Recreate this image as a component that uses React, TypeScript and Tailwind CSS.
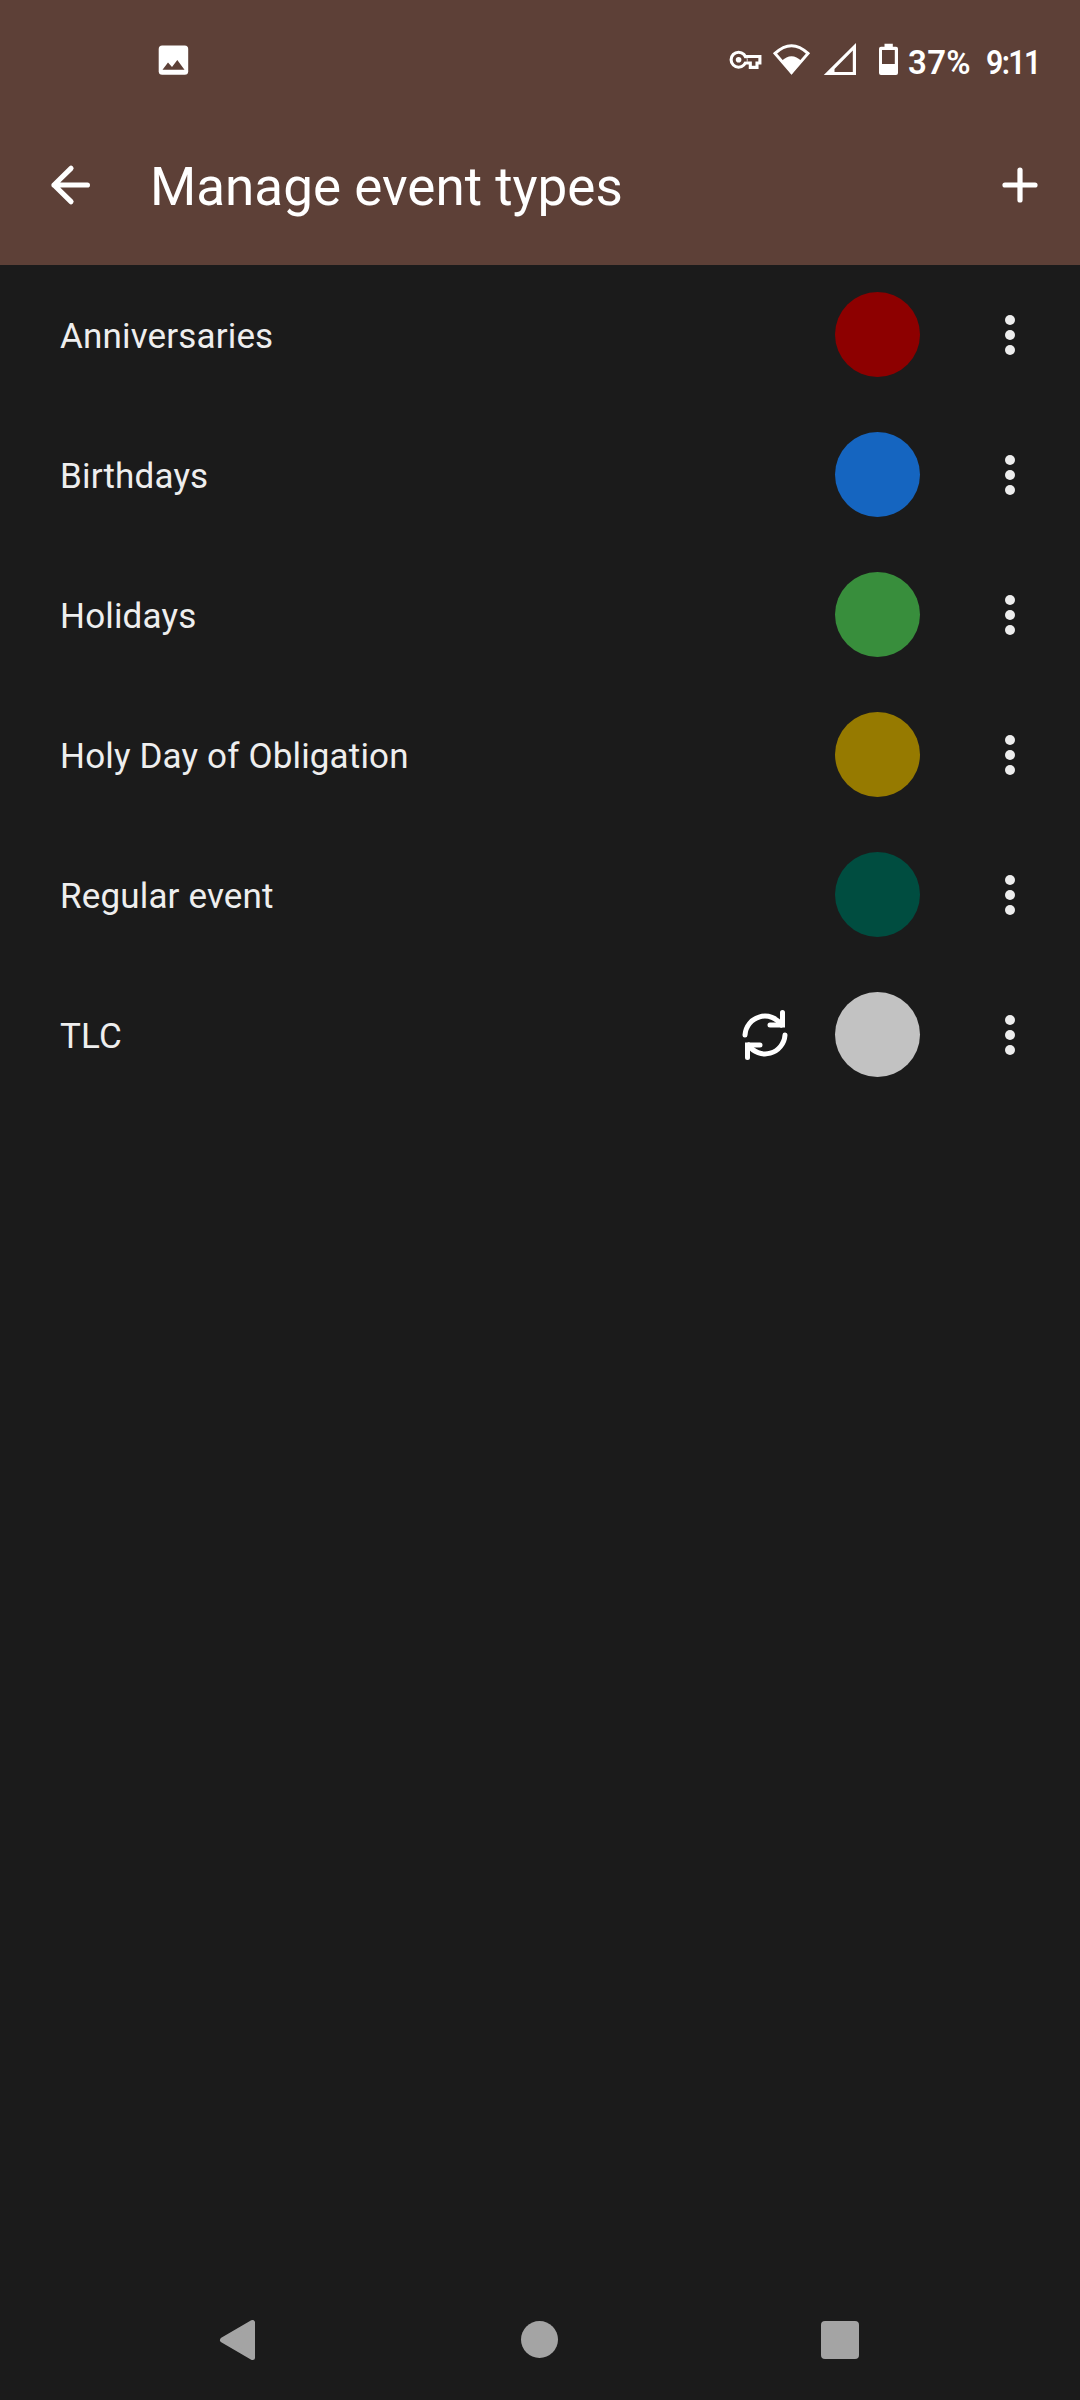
type EventType = { name: string; color: string; synced?: boolean };

const eventTypes: EventType[] = [
  { name: "Anniversaries", color: "bg-[#8d0000]" },
  { name: "Birthdays", color: "bg-[#1565c0]" },
  { name: "Holidays", color: "bg-[#388e3c]" },
  { name: "Holy Day of Obligation", color: "bg-[#967a00]" },
  { name: "Regular event", color: "bg-[#004d40]" },
  { name: "TLC", color: "bg-[#c2c2c2]", synced: true },
];

function StatusBar() {
  return (
    <div className="flex h-[105px] items-start text-white">
      <svg className="mt-[40px] ml-[153px] size-[40px] shrink-0" viewBox="0 0 40 40">
        <rect x="5.7" y="5.5" width="29.5" height="29.2" rx="3.5" fill="#fff" />
        <path d="M9.5 29.7 L15 22.5 L19 27 L24.3 20 L31.5 29.7 Z" fill="#5d4037" />
      </svg>
      <svg className="mt-[40px] ml-[535px] h-[40px] w-[36px] shrink-0" viewBox="728 40 36 40">
        <circle cx="738.6" cy="59.7" r="7.5" fill="none" stroke="#fff" strokeWidth="3.1" />
        <path d="M745 56.5 H759.9 V63 H757 V67.4 H750.3 V63 H745" fill="none" stroke="#fff" strokeWidth="3.1" />
        <path d="M742 58.2 H746.8 V61.6 H742 Z" fill="#5d4037" />
        <circle cx="738.6" cy="59.7" r="2.8" fill="#fff" />
      </svg>
      <svg className="mt-[40px] ml-[6px] h-[40px] w-[44px] shrink-0" viewBox="770 40 44 40">
        <path d="M775 53.4 Q791.5 38 808 53.4 L791.5 72.5 Z" fill="none" stroke="#fff" strokeWidth="3" />
        <path d="M781.5 61 Q791.5 51.5 801.5 61 L791.5 74.5 Z" fill="#fff" />
      </svg>
      <svg className="mt-[40px] ml-[8px] h-[40px] w-[38px] shrink-0" viewBox="822 40 38 40">
        <path fillRule="evenodd" d="M856 43 V75 H823.8 Z M852.8 50.6 L834.5 69 V72 H852.8 Z" fill="#fff" />
      </svg>
      <svg className="mt-[40px] ml-[16px] h-[40px] w-[26px] shrink-0" viewBox="876 40 26 40">
        <path
          fillRule="evenodd"
          d="M884.5 43.7 H892.8 V46.8 H896 Q898 46.8 898 48.8 V73 Q898 75 896 75 H881 Q879 75 879 73 V48.8 Q879 46.8 881 46.8 H884.5 Z M882 50 V64 H894.8 V50 Z"
          fill="#fff"
        />
      </svg>
      <span className="mt-[42px] ml-[6px] w-[78px] origin-left scale-x-[0.97] text-[34px] leading-[40px] font-semibold tracking-[0.3px]">37%</span>
      <span className="mt-[42px] origin-left scale-x-[0.89] text-[34px] leading-[40px] font-semibold tracking-[-1.8px]">9:11</span>
    </div>
  );
}

function Toolbar() {
  return (
    <div className="flex h-[160px] items-center text-white">
      <svg className="ml-[40px] size-[60px] shrink-0" viewBox="40 155 60 60" fill="none" stroke="#fff" strokeWidth="5.2" strokeLinecap="round" strokeLinejoin="round">
        <path d="M71 168.3 L54 185 L71 201.7 M54 185 H87.4" />
      </svg>
      <h1 className="mt-[3px] ml-[50px] flex-1 text-[53px] leading-[64px] whitespace-nowrap">Manage event types</h1>
      <svg className="mr-[30px] size-[60px] shrink-0" viewBox="990 155 60 60" fill="none" stroke="#fff" strokeWidth="5.2" strokeLinecap="round">
        <path d="M1020 170 V200 M1005 185 H1035" />
      </svg>
    </div>
  );
}

function SyncIcon() {
  return (
    <svg className="mr-[40px] size-[60px]" viewBox="0 0 60 60" fill="none" stroke="#fff" strokeWidth="5" strokeLinecap="round">
      <path d="M10 30 A20 20.3 0 0 1 46.5 20" />
      <path d="M47.5 7.5 V20 H35" />
      <path d="M50 30 A20 20.3 0 0 1 13.5 40" />
      <path d="M12.5 52.5 V40 H25" />
    </svg>
  );
}

function EventRow({ name, color, synced }: EventType) {
  return (
    <li className="flex h-[140px] items-center pl-[60px]">
      <span className="mt-[3px] flex-1 text-[35px] leading-[42px] tracking-[0.16px]">{name}</span>
      {synced && <SyncIcon />}
      <span className={`-mt-px size-[85px] rounded-full ${color}`} />
      <span className="mr-[65px] ml-[85px] flex flex-col gap-[5px]">
        <i className="size-[10px] rounded-full bg-[#eeeeee]" />
        <i className="size-[10px] rounded-full bg-[#eeeeee]" />
        <i className="size-[10px] rounded-full bg-[#eeeeee]" />
      </span>
    </li>
  );
}

export default function App() {
  return (
    <div className="flex h-[2400px] w-[1080px] flex-col overflow-hidden bg-[#1b1b1b] font-['Roboto',sans-serif] text-[#eeeeee]">
      <header className="bg-[#5d4037]">
        <StatusBar />
        <Toolbar />
      </header>
      <ul className="flex-1">
        {eventTypes.map((type) => (
          <EventRow key={type.name} {...type} />
        ))}
      </ul>
      <nav className="flex h-[120px] items-center">
        <svg className="ml-[218px] h-[44px] w-[40px]" viewBox="0 0 40 44">
          <path d="M4.5 22 L34.5 4.5 V39.5 Z" fill="#a4a4a4" stroke="#a4a4a4" strokeWidth="5" strokeLinejoin="round" />
        </svg>
        <span className="-mt-px ml-[263px] size-[37px] rounded-full bg-[#a4a4a4]" />
        <span className="ml-[263px] size-[38px] rounded-[4px] bg-[#a4a4a4]" />
      </nav>
    </div>
  );
}
